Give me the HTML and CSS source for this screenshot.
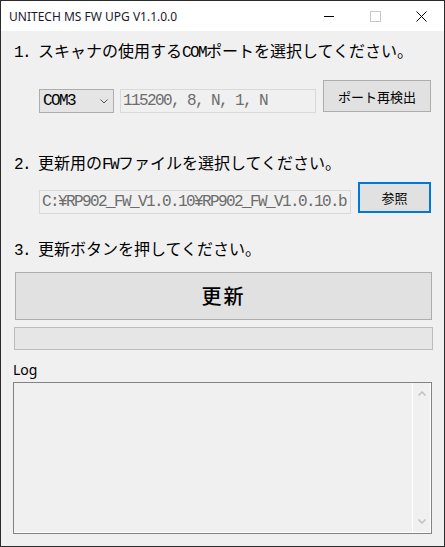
FILE: index.html
```html
<!DOCTYPE html>
<html lang="ja">
<head>
    <meta charset="UTF-8">
    <title>UNITECH MS FW UPG V1.1.0.0</title>
    <link rel="stylesheet" href="styles.css">
</head>
<body>
    <div class="window">
        <div class="titlebar">
            <span class="title">UNITECH MS FW UPG V1.1.0.0</span>
            <div class="controls">
                <span class="ctl">
                    <svg width="10" height="10" viewBox="0 0 10 10"><path d="M0 5.5h10" stroke="#000" stroke-width="1"/></svg>
                </span>
                <span class="ctl">
                    <svg width="11" height="11" viewBox="0 0 11 11"><rect x="0.5" y="0.5" width="10" height="10" fill="none" stroke="#c8c8c8"/></svg>
                </span>
                <span class="ctl">
                    <svg width="11" height="11" viewBox="0 0 11 11"><path d="M0.5 0.5l10 10M10.5 0.5l-10 10" stroke="#000" stroke-width="1"/></svg>
                </span>
            </div>
        </div>

        <div class="client">
            <p class="step"><span class="hw">1. </span>スキャナの使用する<span class="hw">COM</span>ポートを選択してください。</p>
            <div class="row port-row">
                <div class="combo">
                    <span class="combo-text">COM3</span>
                    <svg class="chev" width="8" height="5" viewBox="0 0 8 5"><path d="M0.5 0.5l3.5 3.5 3.5-3.5" fill="none" stroke="#555"/></svg>
                </div>
                <div class="textbox settings">115200, 8, N, 1, N</div>
                <button class="btn rescan">ポート再検出</button>
            </div>

            <p class="step step2"><span class="hw">2. </span>更新用の<span class="hw">FW</span>ファイルを選択してください。</p>
            <div class="row file-row">
                <div class="textbox path">C:¥RP902_FW_V1.0.10¥RP902_FW_V1.0.10.b</div>
                <button class="btn browse">参照</button>
            </div>

            <p class="step step3"><span class="hw">3. </span>更新ボタンを押してください。</p>
            <button class="btn update">更新</button>
            <div class="progress"></div>

            <div class="log-label">Log</div>
            <div class="log">
                <div class="log-text"></div>
                <div class="scrollbar">
                    <svg width="8" height="5" viewBox="0 0 8 5"><path d="M0.5 4.5l3.5-3.5 3.5 3.5" fill="none" stroke="#c0c0c0" stroke-width="1.5"/></svg>
                    <svg width="8" height="5" viewBox="0 0 8 5"><path d="M0.5 0.5l3.5 3.5 3.5-3.5" fill="none" stroke="#c0c0c0" stroke-width="1.5"/></svg>
                </div>
            </div>
        </div>
    </div>
</body>
</html>
```

FILE: styles.css
```css
body {
    margin: 0;
    padding: 0;
    background-color: #f0f0f0;
    font-family: "Noto Sans CJK JP", sans-serif;
}

.window {
    width: 445px;
    height: 547px;
    box-sizing: border-box;
    border: 1px solid #2b2b2b;
    background-color: #f0f0f0;
    display: flex;
    flex-direction: column;
}

.titlebar {
    height: 30px;
    flex-shrink: 0;
    background-color: #fff;
    display: flex;
    align-items: center;
    justify-content: space-between;
}

.title {
    padding-left: 8px;
    font-family: "Noto Sans", sans-serif;
    font-size: 12px;
    color: #1a1a2e;
}

.controls {
    display: flex;
    height: 100%;
}

.ctl {
    width: 46px;
    height: 100%;
    display: flex;
    align-items: center;
    justify-content: center;
}

.client {
    display: flex;
    flex-direction: column;
    align-items: flex-start;
}

.step {
    height: 20px;
    margin: 9px 0 0 13px;
    font-size: 16px;
    line-height: 20px;
    color: #000;
    white-space: nowrap;
}

.hw {
    font-family: "Liberation Mono", monospace;
    font-size: 16px;
    letter-spacing: -1.6px;
    line-height: 1;
}

.step2 {
    margin-top: 39px;
}

.step3 {
    margin-top: 24px;
}

.row {
    display: flex;
    align-items: flex-start;
    margin-left: 38px;
    flex-shrink: 0;
}

.port-row {
    margin-top: 20px;
}

.file-row {
    margin-top: 10px;
}

.combo {
    width: 75px;
    height: 24px;
    box-sizing: border-box;
    margin-top: 9px;
    border: 1px solid #adadad;
    background-color: #e5e5e5;
    display: flex;
    align-items: center;
    justify-content: space-between;
    padding: 0 5px 0 3px;
}

.combo-text,
.textbox {
    font-family: "Liberation Mono", monospace;
    font-size: 16px;
    letter-spacing: -1.6px;
}

.combo-text {
    color: #000;
    line-height: 22px;
}

.textbox {
    height: 24px;
    box-sizing: border-box;
    border: 1px solid #d9d9d9;
    background-color: #f0f0f0;
    color: #6d6d6d;
    padding: 0 2px;
    line-height: 22px;
    white-space: nowrap;
    overflow: hidden;
}

.settings {
    width: 196px;
    margin: 9px 0 0 6px;
}

.path {
    width: 312px;
    margin-top: 8px;
}

.btn {
    box-sizing: border-box;
    border: 1px solid #adadad;
    background-color: #e1e1e1;
    color: #000;
    font-family: "Noto Sans CJK JP", sans-serif;
    line-height: 1;
    padding: 0;
    margin: 0;
    flex-shrink: 0;
}

.rescan {
    width: 108px;
    height: 32px;
    margin-left: 7px;
    font-size: 13px;
}

.browse {
    width: 73px;
    height: 31px;
    margin-left: 7px;
    border: 2px solid #0078d7;
    font-size: 13px;
}

.update {
    width: 417px;
    height: 48px;
    margin: 14px 0 0 14px;
    font-size: 20px;
    letter-spacing: 2px;
    font-weight: 500;
}

.progress {
    width: 419px;
    height: 23px;
    box-sizing: border-box;
    margin: 7px 0 0 13px;
    border: 1px solid #bcbcbc;
    background-color: #e6e6e6;
}

.log-label {
    margin: 12px 0 0 12px;
    font-family: "Noto Sans", sans-serif;
    font-size: 14px;
    line-height: 16px;
    color: #000;
}

.log {
    width: 419px;
    height: 152px;
    box-sizing: border-box;
    margin: 4px 0 0 12px;
    border: 1px solid #828282;
    box-shadow: inset -1px -1px 0 #fff;
    display: flex;
}

.log-text {
    flex: 1;
}

.scrollbar {
    width: 17px;
    margin-bottom: 1px;
    margin-right: 1px;
    border-left: 1px solid #fff;
    display: flex;
    flex-direction: column;
    justify-content: space-between;
    align-items: center;
    padding: 8px 0;
}
```
